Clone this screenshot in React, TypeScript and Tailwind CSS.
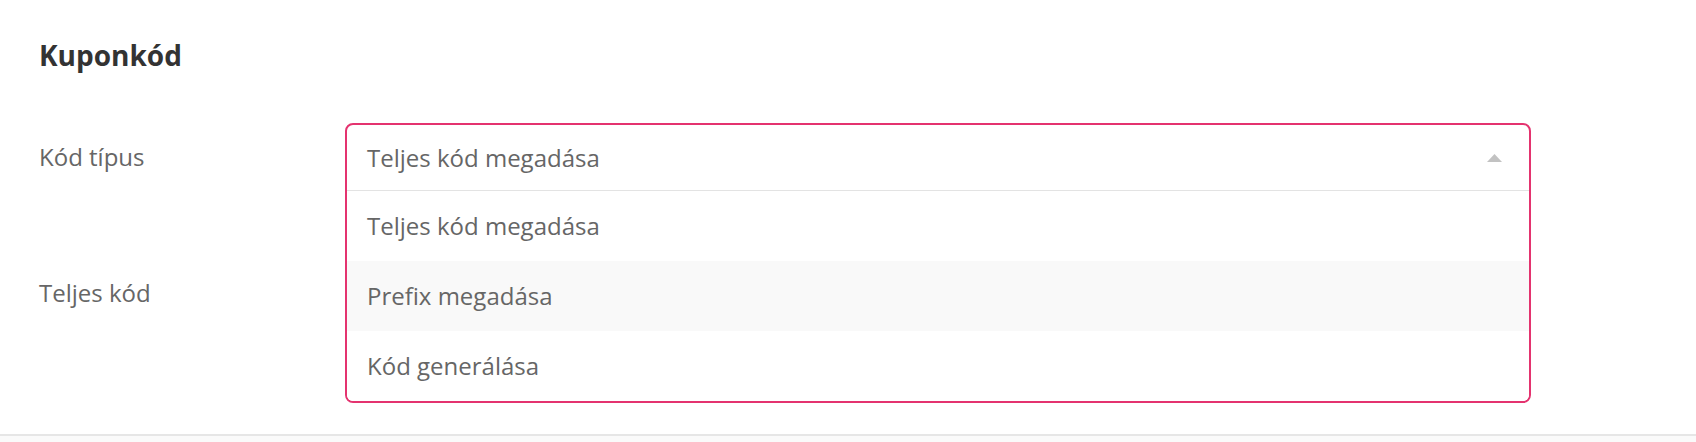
import React, { useState } from 'react';

const options = ['Teljes kód megadása', 'Prefix megadása', 'Kód generálása'];

const CodeTypeSelect: React.FC = () => {
  const [value] = useState(options[0]);
  const [hovered, setHovered] = useState<number | null>(1);

  return (
    <div className="relative h-[68px] w-full">
      <div className="absolute left-0 right-0 top-0 z-10 rounded-[8px] border-2 border-[#e4336f] bg-white">
        <div className="flex h-[66px] items-center justify-between border-b-[1.5px] border-[#e3e3e3] pl-[20px] pr-[27px]">
          <span>{value}</span>
          <svg width="15" height="8" viewBox="0 0 15 8" className="fill-[#c2c2c2]">
            <path d="M7.5 0 L15 8 L0 8 Z" />
          </svg>
        </div>
        <ul>
          {options.map((opt, i) => (
            <li
              key={opt}
              onMouseEnter={() => setHovered(i)}
              className={`flex h-[70px] items-center pl-[20px] ${hovered === i ? 'bg-[#f9f9f9]' : 'bg-white'} ${i === options.length - 1 ? 'rounded-b-[6px]' : ''}`}
            >
              {opt}
            </li>
          ))}
        </ul>
      </div>
    </div>
  );
};

const FormRow: React.FC<{ label: string; children: React.ReactNode }> = ({ label, children }) => (
  <div className="flex items-center">
    <div className="w-[306px] shrink-0">{label}</div>
    <div className="flex-1">{children}</div>
  </div>
);

export default function App() {
  return (
    <div className="min-h-[442px] bg-[#fafafa] font-['Open_Sans',sans-serif]">
      <div className="border-b-2 border-[#e6e6e6] bg-white pl-[39px] pr-[165px] pb-[107px] pt-[36px] text-[24px] text-[#666]">
        <h2 className="text-[28px] font-bold leading-[38px] text-[#333]">Kuponkód</h2>
        <div className="mt-[49px] flex flex-col gap-[68px]">
          <FormRow label="Kód típus">
            <CodeTypeSelect />
          </FormRow>
          <FormRow label="Teljes kód">
            <input
              type="text"
              className="h-[68px] w-full rounded-[8px] border-2 border-[#ddd] px-[20px] outline-none"
            />
          </FormRow>
        </div>
      </div>
    </div>
  );
}
